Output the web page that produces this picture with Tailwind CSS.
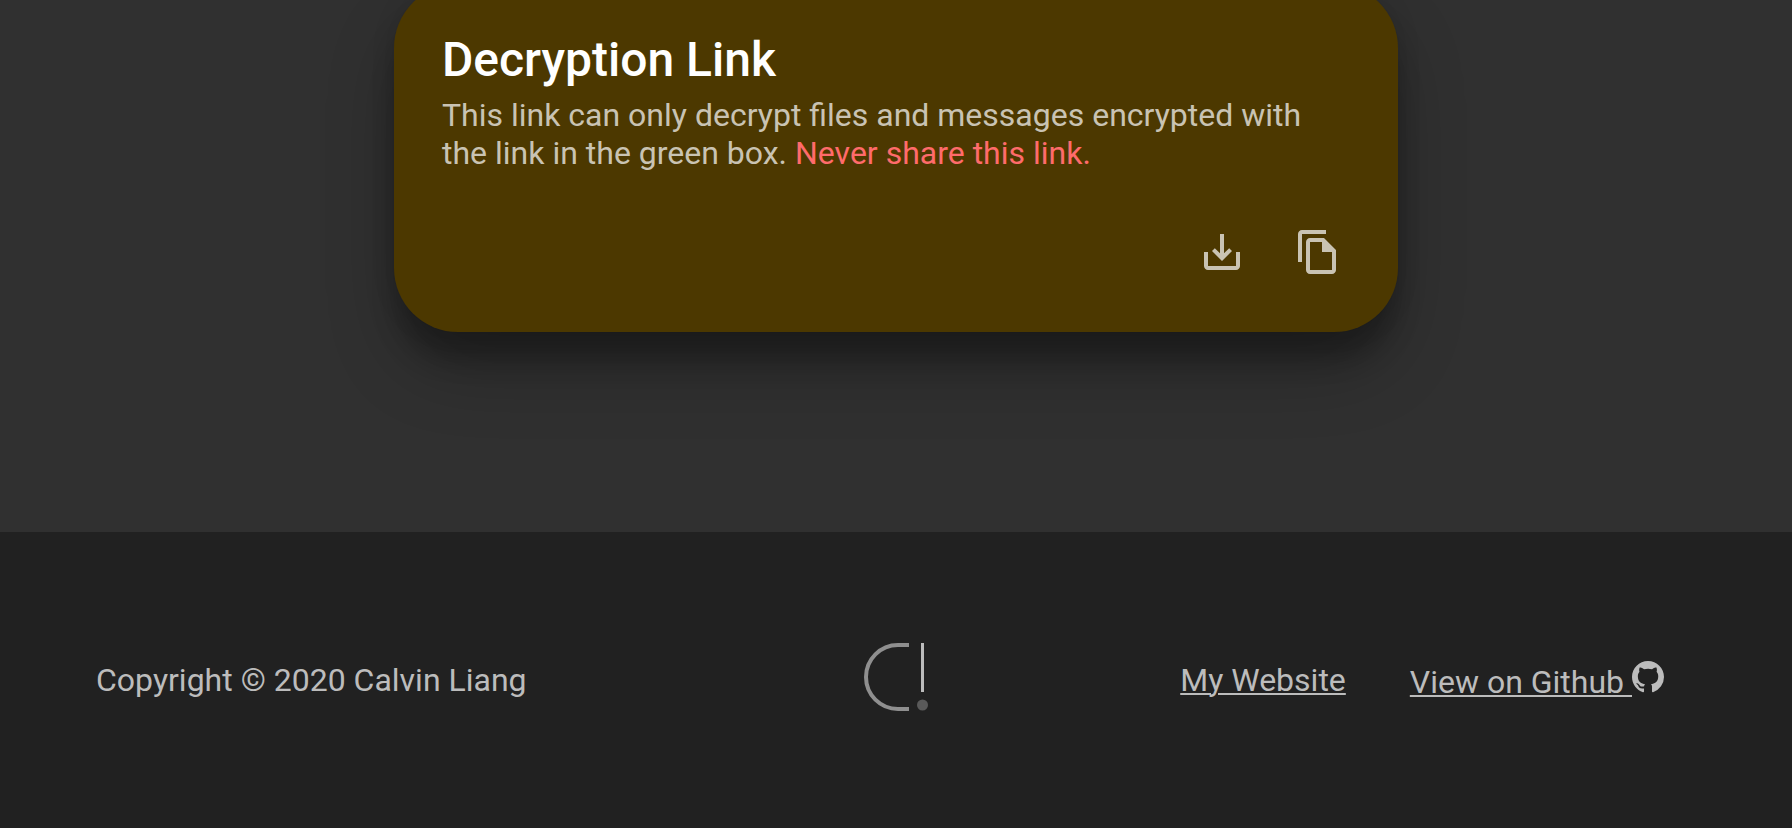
<!DOCTYPE html>
<html lang="en">
<head>
<meta charset="utf-8">
<meta name="viewport" content="width=device-width, initial-scale=1">
<title>Decryption Link</title>
<script src="https://cdn.jsdelivr.net/npm/@tailwindcss/browser@4"></script>
</head>
<body class="flex min-h-screen flex-col bg-[#303030] font-['Roboto',sans-serif]">
<main class="flex flex-col items-center overflow-hidden px-8 pb-[200px]">
  <section class="-mt-4 w-full max-w-[1004px] rounded-[64px] bg-[#4c3800] p-8 shadow-[0_38px_76px_-10px_rgba(0,0,0,0.3),0_30px_24px_-2px_rgba(0,0,0,0.22),0_0_24px_rgba(0,0,0,0.1)]">
    <div class="px-4 pt-3">
      <h1 class="text-5xl leading-[64px] font-medium text-white">Decryption Link</h1>
      <p class="mt-1 text-[32px] leading-[38px] text-[#c9c3b3]">This link can only decrypt files and messages encrypted with the link in the green box. <span class="text-[#ff6b6b]">Never share this link.</span></p>
    </div>
    <div class="mt-8 flex justify-end text-[#c9c3b3]">
      <button type="button" aria-label="Download link" class="rounded-full p-6">
        <svg class="size-12" viewBox="0 0 24 24" fill="currentColor" aria-hidden="true"><path d="M19 12v7H5v-7H3v7c0 1.100.9 2 2 2h14c1.100 0 2-.9 2-2v-7h-2zm-6 .67l2.590-2.580L17 11.500l-5 5-5-5 1.410-1.410L11 12.670V3h2z"/></svg>
      </button>
      <button type="button" aria-label="Copy link" class="rounded-full p-6">
        <svg class="size-12" viewBox="0 0 24 24" fill="currentColor" aria-hidden="true"><path d="M16 1H4c-1.100 0-2 .9-2 2v14h2V3h12V1zm-1 4H8c-1.100 0-1.990.9-1.990 2L6 21c0 1.100.89 2 1.990 2H19c1.100 0 2-.9 2-2V11l-6-6zM8 21V7h6v5h5v9H8z"/></svg>
      </button>
    </div>
  </section>
</main>
<footer class="grid flex-1 grid-cols-[1fr_auto_1fr] items-center bg-[#212121] px-24 text-[32px] leading-[38px] text-[#bcbcbc]">
  <p>Copyright © 2020 Calvin Liang</p>
  <svg class="mb-1.5 h-[68px] w-16" viewBox="0 0 64 68" fill="none" role="img" aria-label="Calvin Liang logo">
    <path d="M45 2H34a32 32 0 0 0 0 64H45" stroke="#8f8f8f" stroke-width="4"/>
    <path d="M58.500 0V49" stroke="#bcbcbc" stroke-width="3"/>
    <circle cx="58.500" cy="62" r="5.500" fill="#5a5a5a"/>
  </svg>
  <nav class="flex items-center justify-end gap-16 pr-8">
    <a href="#" class="underline decoration-2 underline-offset-2">My Website</a>
    <a href="#" class="flex"><span class="pt-1 whitespace-pre underline decoration-2 underline-offset-2">View on Github </span><svg class="mt-0.5 size-8" viewBox="0 0 16 16" fill="currentColor" aria-hidden="true"><path fill-rule="evenodd" d="M8 0C3.580 0 0 3.580 0 8c0 3.540 2.290 6.530 5.470 7.590.4.070.55-.17.55-.38 0-.19-.01-.82-.01-1.490-2.010.37-2.530-.49-2.690-.94-.09-.23-.48-.94-.82-1.130-.28-.15-.68-.52-.01-.53.63-.01 1.080.58 1.230.82.72 1.210 1.870.87 2.330.66.07-.52.28-.87.51-1.070-1.780-.2-3.640-.89-3.640-3.950 0-.87.31-1.590.82-2.150-.08-.2-.36-1.020.08-2.120 0 0 .67-.21 2.200.82.64-.18 1.320-.27 2-.27s1.360.09 2 .27c1.530-1.040 2.200-.82 2.200-.82.44 1.100.16 1.920.08 2.120.51.56.82 1.270.82 2.150 0 3.070-1.870 3.750-3.650 3.950.29.25.54.73.54 1.480 0 1.070-.01 1.930-.01 2.200 0 .21.15.46.55.38A8.010 8.010 0 0 0 16 8c0-4.420-3.580-8-8-8z"/></svg></a>
  </nav>
</footer>
</body>
</html>
